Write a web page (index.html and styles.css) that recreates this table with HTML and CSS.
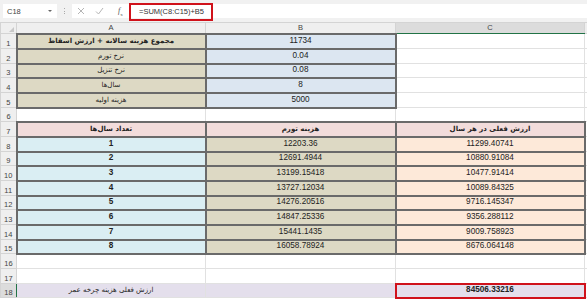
FILE: index.html
```html
<!DOCTYPE html>
<html lang="fa">
<head>
<meta charset="utf-8">
<title>Sheet</title>
<link rel="stylesheet" href="styles.css">
</head>
<body>
<div class="topbar">
  <div class="namebox"><span class="ref">C18</span><span class="caret"></span></div>
  <div class="dots"><i></i><i></i><i></i></div>
  <div class="fbar">
    <svg class="ic" width="8" height="8" viewBox="0 0 8 8"><path d="M1 1L7 7M7 1L1 7" stroke="#b5b5b5" stroke-width="1" fill="none"/></svg>
    <svg class="ic" width="9" height="8" viewBox="0 0 9 8"><path d="M1 4.5L3.5 7L8 1" stroke="#b5b5b5" stroke-width="1" fill="none"/></svg>
    <span class="fx"><i>f</i><sub>x</sub></span>
    <div class="formula">=SUM(C8:C15)+B5</div>
  </div>
</div>
<table class="sheet">
  <colgroup><col class="c0"><col class="ca"><col class="cb"><col class="cc"><col class="cd"></colgroup>
  <tr class="hdr"><td class="corner"><span class="tri"></span></td><td>A</td><td>B</td><td class="sel">C</td><td></td></tr>
  <tr class="r15"><td class="rh">1</td><td class="tan bx fa b">مجموع هزینه سالانه + ارزش اسقاط</td><td class="blu bx">11734</td><td></td><td></td></tr>
  <tr class="r15"><td class="rh">2</td><td class="tan bx fa">نرخ تورم</td><td class="blu bx">0.04</td><td></td><td></td></tr>
  <tr class="r14"><td class="rh">3</td><td class="tan bx fa">نرخ تنزیل</td><td class="blu bx">0.08</td><td></td><td></td></tr>
  <tr class="r15"><td class="rh">4</td><td class="tan bx fa">سال‌ها</td><td class="blu bx">8</td><td></td><td></td></tr>
  <tr class="r15"><td class="rh">5</td><td class="tan bx fa">هزینه اولیه</td><td class="blu bx">5000</td><td></td><td></td></tr>
  <tr class="r14"><td class="rh">6</td><td></td><td></td><td></td><td></td></tr>
  <tr class="r15"><td class="rh">7</td><td class="pink bx fa b">تعداد سال‌ها</td><td class="pink bx fa b">هزینه تورم</td><td class="pink bx fa b">ارزش فعلی در هر سال</td><td></td></tr>
  <tr class="r15"><td class="rh">8</td><td class="lblu bx b">1</td><td class="tan bx">12203.36</td><td class="peach bx">11299.40741</td><td></td></tr>
  <tr class="r14"><td class="rh">9</td><td class="lblu bx b">2</td><td class="tan bx">12691.4944</td><td class="peach bx">10880.91084</td><td></td></tr>
  <tr class="r15"><td class="rh">10</td><td class="lblu bx b">3</td><td class="tan bx">13199.15418</td><td class="peach bx">10477.91414</td><td></td></tr>
  <tr class="r15"><td class="rh">11</td><td class="lblu bx b">4</td><td class="tan bx">13727.12034</td><td class="peach bx">10089.84325</td><td></td></tr>
  <tr class="r14"><td class="rh">12</td><td class="lblu bx b">5</td><td class="tan bx">14276.20516</td><td class="peach bx">9716.145347</td><td></td></tr>
  <tr class="r15"><td class="rh">13</td><td class="lblu bx b">6</td><td class="tan bx">14847.25336</td><td class="peach bx">9356.288112</td><td></td></tr>
  <tr class="r15"><td class="rh">14</td><td class="lblu bx b">7</td><td class="tan bx">15441.1435</td><td class="peach bx">9009.758923</td><td></td></tr>
  <tr class="r14"><td class="rh">15</td><td class="lblu bx b">8</td><td class="tan bx">16058.78924</td><td class="peach bx">8676.064148</td><td></td></tr>
  <tr class="r15"><td class="rh">16</td><td></td><td></td><td></td><td></td></tr>
  <tr class="r15"><td class="rh">17</td><td></td><td></td><td></td><td></td></tr>
  <tr class="r14"><td class="rh rsel">18</td><td class="lav fa">ارزش فعلی هزینه چرخه عمر</td><td class="lav"></td><td class="lav red b">84506.33216</td><td></td></tr>
</table>
</body>
</html>
```

FILE: styles.css
```css
html, body {
  margin: 0;
  padding: 0;
}
body {
  width: 587px;
  height: 301px;
  overflow: hidden;
  background: #ffffff;
  font-family: "Liberation Sans", "DejaVu Sans", sans-serif;
  color: #222;
}

.topbar {
  display: flex;
  align-items: center;
  height: 22px;
  background: #f1f1f1;
  padding-left: 3px;
}
.namebox {
  width: 54px;
  height: 14px;
  background: #fff;
  display: flex;
  align-items: center;
  justify-content: space-between;
  padding: 0 5px 0 4px;
  box-sizing: border-box;
}
.ref {
  font-size: 7.5px;
  color: #444;
}
.caret {
  width: 0;
  height: 0;
  border-left: 2px solid transparent;
  border-right: 2px solid transparent;
  border-top: 2.5px solid #666;
}
.dots {
  width: 15px;
  display: flex;
  flex-direction: column;
  align-items: center;
  gap: 1.5px;
}
.dots i {
  width: 1px;
  height: 1px;
  background: #aaa;
  display: block;
}
.fbar {
  flex: 1;
  height: 14px;
  background: #fff;
  display: flex;
  align-items: center;
  padding-left: 5px;
}
.ic {
  margin-right: 10px;
  display: block;
}
.fx {
  font-family: "Liberation Serif", serif;
  font-size: 8px;
  color: #555;
  margin-left: 4px;
  width: 9px;
}
.fx sub {
  font-size: 5px;
}
.formula {
  margin-left: 2px;
  height: 18px;
  width: 84px;
  box-sizing: border-box;
  border: 2px solid #d0121b;
  font-size: 7.5px;
  color: #333;
  display: flex;
  align-items: center;
  padding-left: 8px;
  margin-top: 1px;
}

.sheet {
  border-collapse: collapse;
  table-layout: fixed;
  width: 595px;
  font-size: 8.2px;
}
.c0 { width: 16px; }
.ca { width: 189px; }
.cb { width: 190px; }
.cc { width: 189px; }
.cd { width: 11px; }

.sheet td {
  padding: 0;
  border: 1px solid #e1e1e1;
  text-align: center;
  vertical-align: middle;
  white-space: nowrap;
  overflow: hidden;
  line-height: 1;
}
.hdr { height: 11px; }
.hdr td {
  background: #efefef;
  color: #444;
  font-size: 7.5px;
  border-color: #d4d4d4;
}
.hdr td.sel {
  background: #dcdcdc;
  border-bottom: 1px solid #217346;
}
.corner { position: relative; }
.tri {
  position: absolute;
  right: 2px;
  bottom: 1px;
  width: 0;
  height: 0;
  border-left: 5px solid transparent;
  border-bottom: 5px solid #c8c8c8;
}
.r15 { height: 15px; }
.r14 { height: 14px; }

.sheet td.rh {
  background: #efefef;
  color: #444;
  font-size: 7.5px;
  border-color: #d4d4d4;
  vertical-align: bottom;
  padding-bottom: 1px;
}
.sheet td.rsel {
  background: #dcdcdc;
  border-right: 1px solid #217346;
}

.fa {
  font-family: "DejaVu Sans", sans-serif;
  font-size: 7px;
  direction: rtl;
}
.b { font-weight: bold; }

.tan { background: #ddd9c4; }
.blu { background: #dce6f1; }
.pink { background: #f2dcdb; }
.lblu { background: #daeef3; }
.peach { background: #fde9d9; }
.lav { background: #e4dfec; }

.sheet td.bx {
  border: 2px solid #6a6a6a;
}
.sheet td.red {
  border: 2px solid #d0121b;
}
```
